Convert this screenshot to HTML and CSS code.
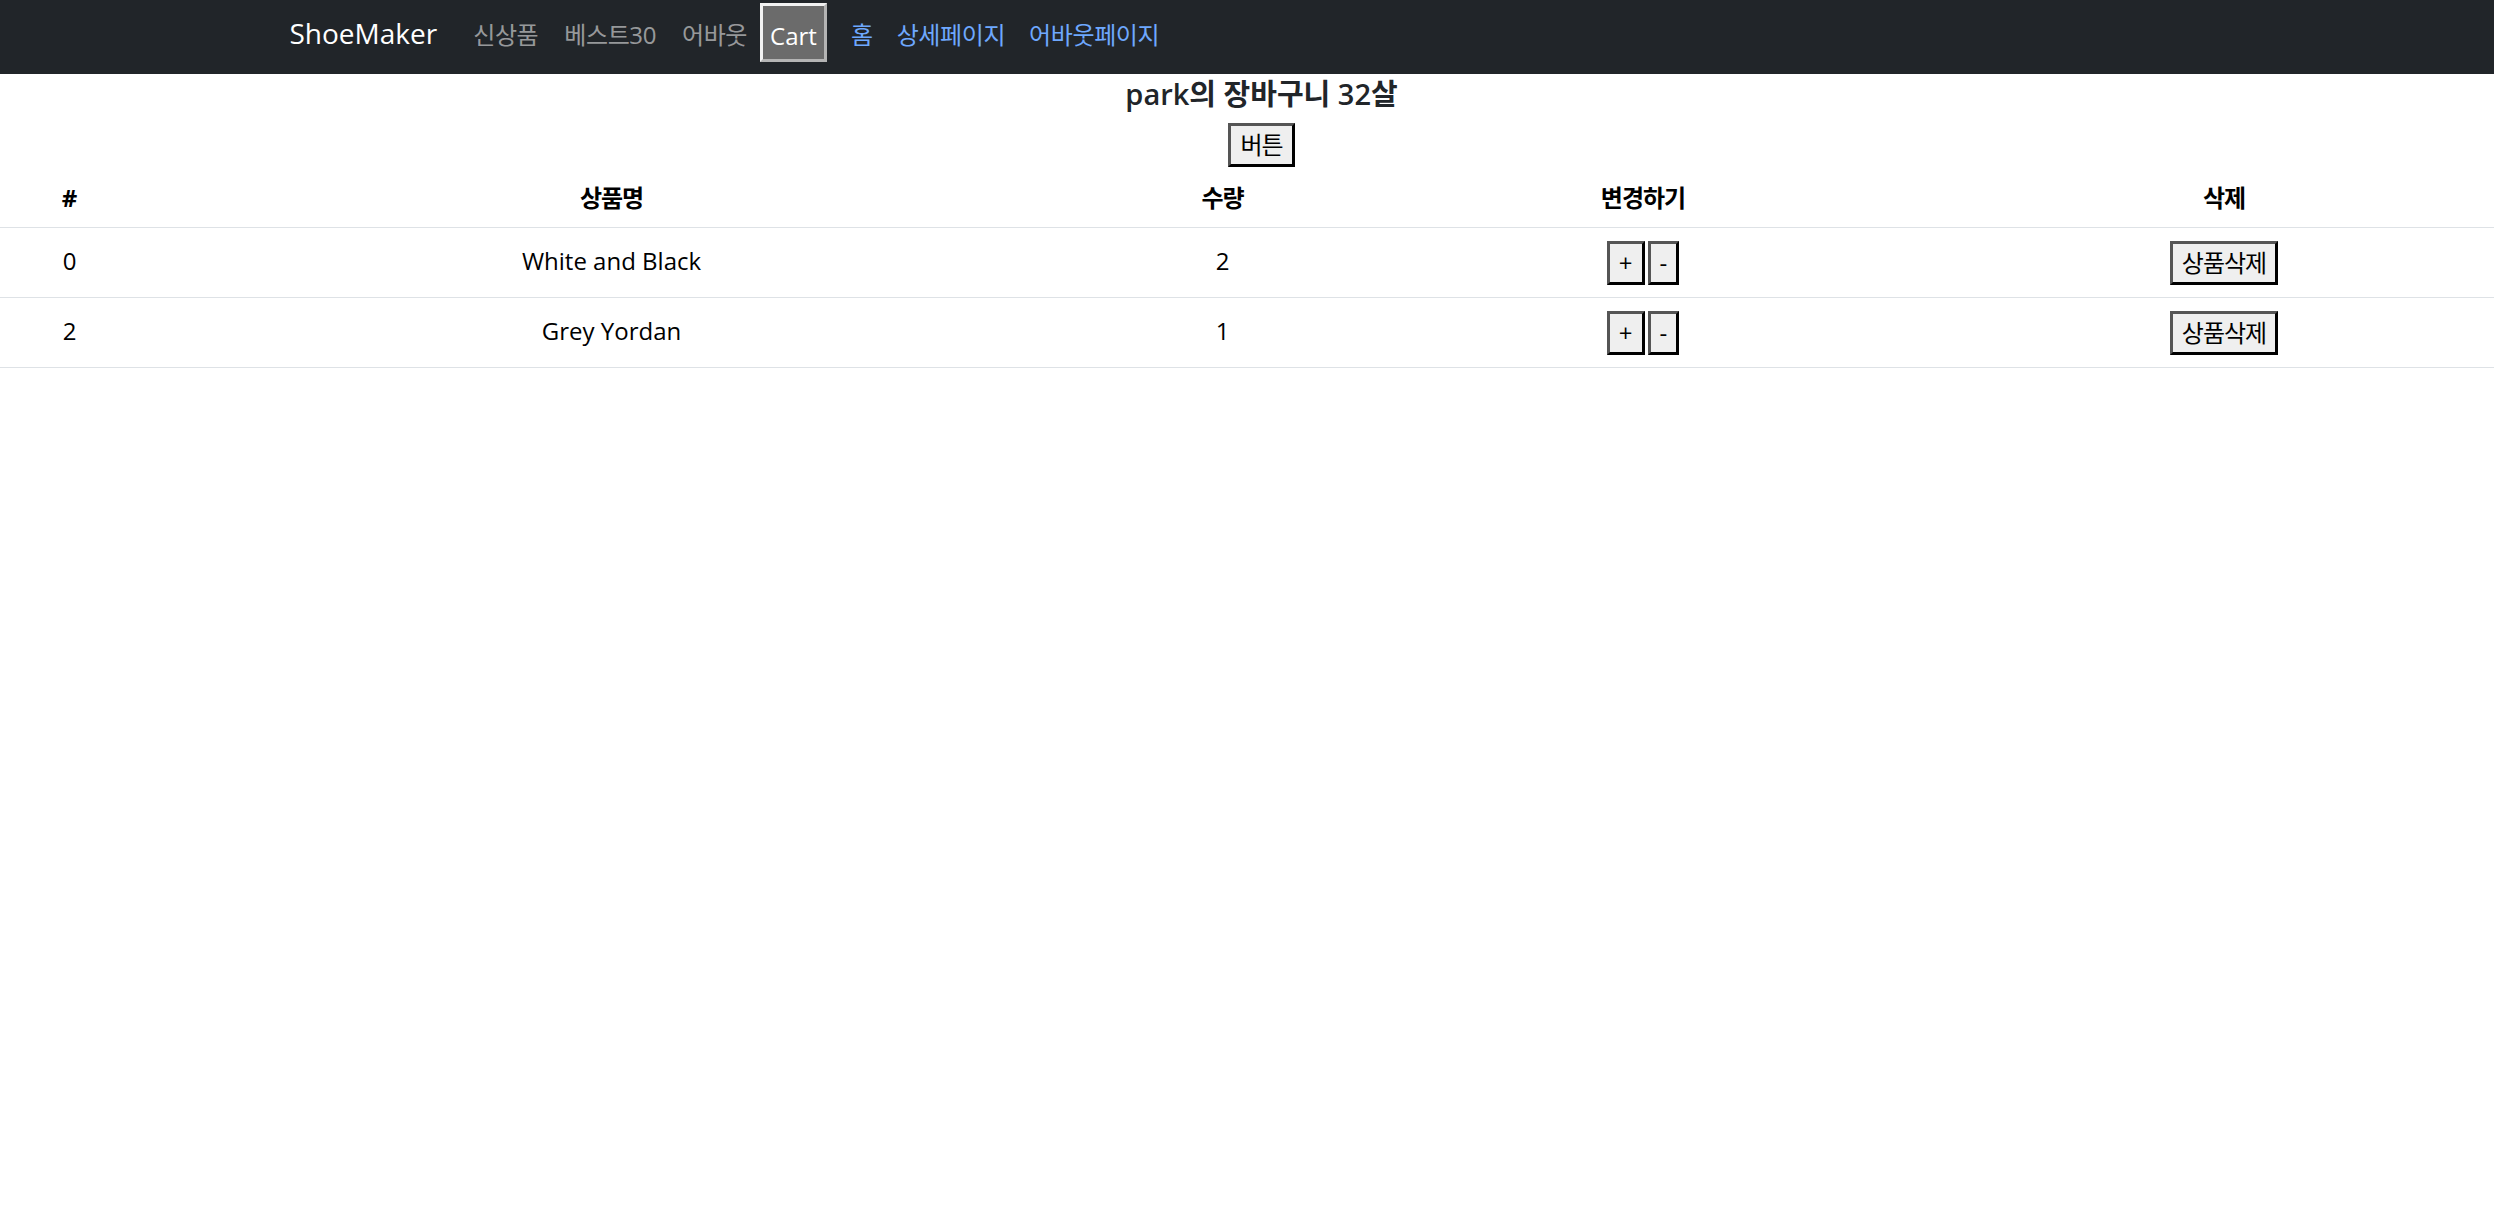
FILE: index.html
```html
<!DOCTYPE html>
<html lang="ko">
<head>
<meta charset="utf-8">
<title>ShoeMaker</title>
<link rel="stylesheet" href="styles.css">
</head>
<body>
<nav class="navbar">
  <div class="nav-container">
    <span class="brand">ShoeMaker</span>
    <span class="nav-link">신상품</span>
    <span class="nav-link">베스트30</span>
    <span class="nav-link">어바웃</span>
    <button class="cart-btn">Cart</button>
    <a class="link link-home">홈</a>
    <a class="link">상세페이지</a>
    <a class="link">어바웃페이지</a>
  </div>
</nav>
<main class="page">
  <h4 class="title">park의 장바구니 32살</h4>
  <div class="btn-row"><button class="btn ko">버튼</button></div>
  <table class="table">
    <colgroup>
      <col class="c1"><col class="c2"><col class="c3"><col class="c4"><col class="c5">
    </colgroup>
    <thead>
      <tr><th>#</th><th class="ko">상품명</th><th class="ko">수량</th><th class="ko">변경하기</th><th class="ko">삭제</th></tr>
    </thead>
    <tbody>
      <tr>
        <td>0</td><td>White and Black</td><td>2</td>
        <td><button class="btn">+</button><button class="btn btn-minus">-</button></td>
        <td><button class="btn ko">상품삭제</button></td>
      </tr>
      <tr>
        <td>2</td><td>Grey Yordan</td><td>1</td>
        <td><button class="btn">+</button><button class="btn btn-minus">-</button></td>
        <td><button class="btn ko">상품삭제</button></td>
      </tr>
    </tbody>
  </table>
</main>
</body>
</html>
```

FILE: styles.css
```css
html {
  overflow: hidden;
}
body {
  margin: 0;
  width: 2523px;
  font-family: "Open Sans", "Noto Sans CJK KR", sans-serif;
  font-size: 24px;
  line-height: 36px;
  color: #212529;
  background: #fff;
}
.ko {
  letter-spacing: -1px;
}
.navbar {
  background: #212529;
  height: 74px;
}
.nav-container {
  box-sizing: border-box;
  max-width: 1980px;
  margin: 0 auto;
  padding: 0 18px;
  height: 65px;
  display: flex;
  align-items: center;
}
.brand {
  font-size: 28px;
  line-height: 45px;
  padding-top: 1px;
  color: #fff;
  margin-right: 23px;
}
.nav-link {
  color: rgba(255, 255, 255, 0.55);
  padding: 4px 13px 0;
  line-height: 36px;
  letter-spacing: -0.4px;
}
.cart-btn {
  font-family: inherit;
  font-size: 24px;
  line-height: 36px;
  color: #fff;
  background: #6b6b6b;
  width: 67px;
  height: 59px;
  padding: 7px 0 0;
  border: 3px solid;
  border-color: #f2f2f2 #b4b4b4 #b4b4b4 #f2f2f2;
  text-align: center;
}
.link {
  color: #6ea8fe;
  padding: 4px 0 0;
  margin-left: 24px;
  line-height: 36px;
  letter-spacing: -0.4px;
}
.page {
  display: block;
}
.title {
  margin: 4px 0 13px;
  font-size: 29px;
  line-height: 32px;
  font-weight: 600;
  text-align: center;
  color: #212529;
}
.btn-row {
  display: flex;
  justify-content: center;
}
.btn {
  font-family: inherit;
  font-size: 24px;
  line-height: 36px;
  color: #000;
  background: #efefef;
  padding: 1px 9px;
  border: 3px solid;
  border-color: #555 #000 #000 #555;
  vertical-align: top;
  margin: 0;
}
.btn-minus {
  margin-left: 3px;
}
.table {
  width: 2523px;
  table-layout: fixed;
  border-collapse: collapse;
  color: #000;
}
.c1 { width: 139px; }
.c2 { width: 945px; }
.c3 { width: 277px; }
.c4 { width: 564px; }
.c5 { width: 598px; }
.table th,
.table td {
  padding: 12px;
  text-align: center;
  vertical-align: top;
  border-bottom: 1px solid #dee2e6;
}
.table th {
  font-weight: 700;
  padding-top: 13px;
  padding-bottom: 11px;
}
.table td {
  padding-top: 15px;
  padding-bottom: 12px;
}
.table td .btn {
  margin-top: -2px;
}
.table td .btn-minus {
  margin-left: 3px;
}
```
